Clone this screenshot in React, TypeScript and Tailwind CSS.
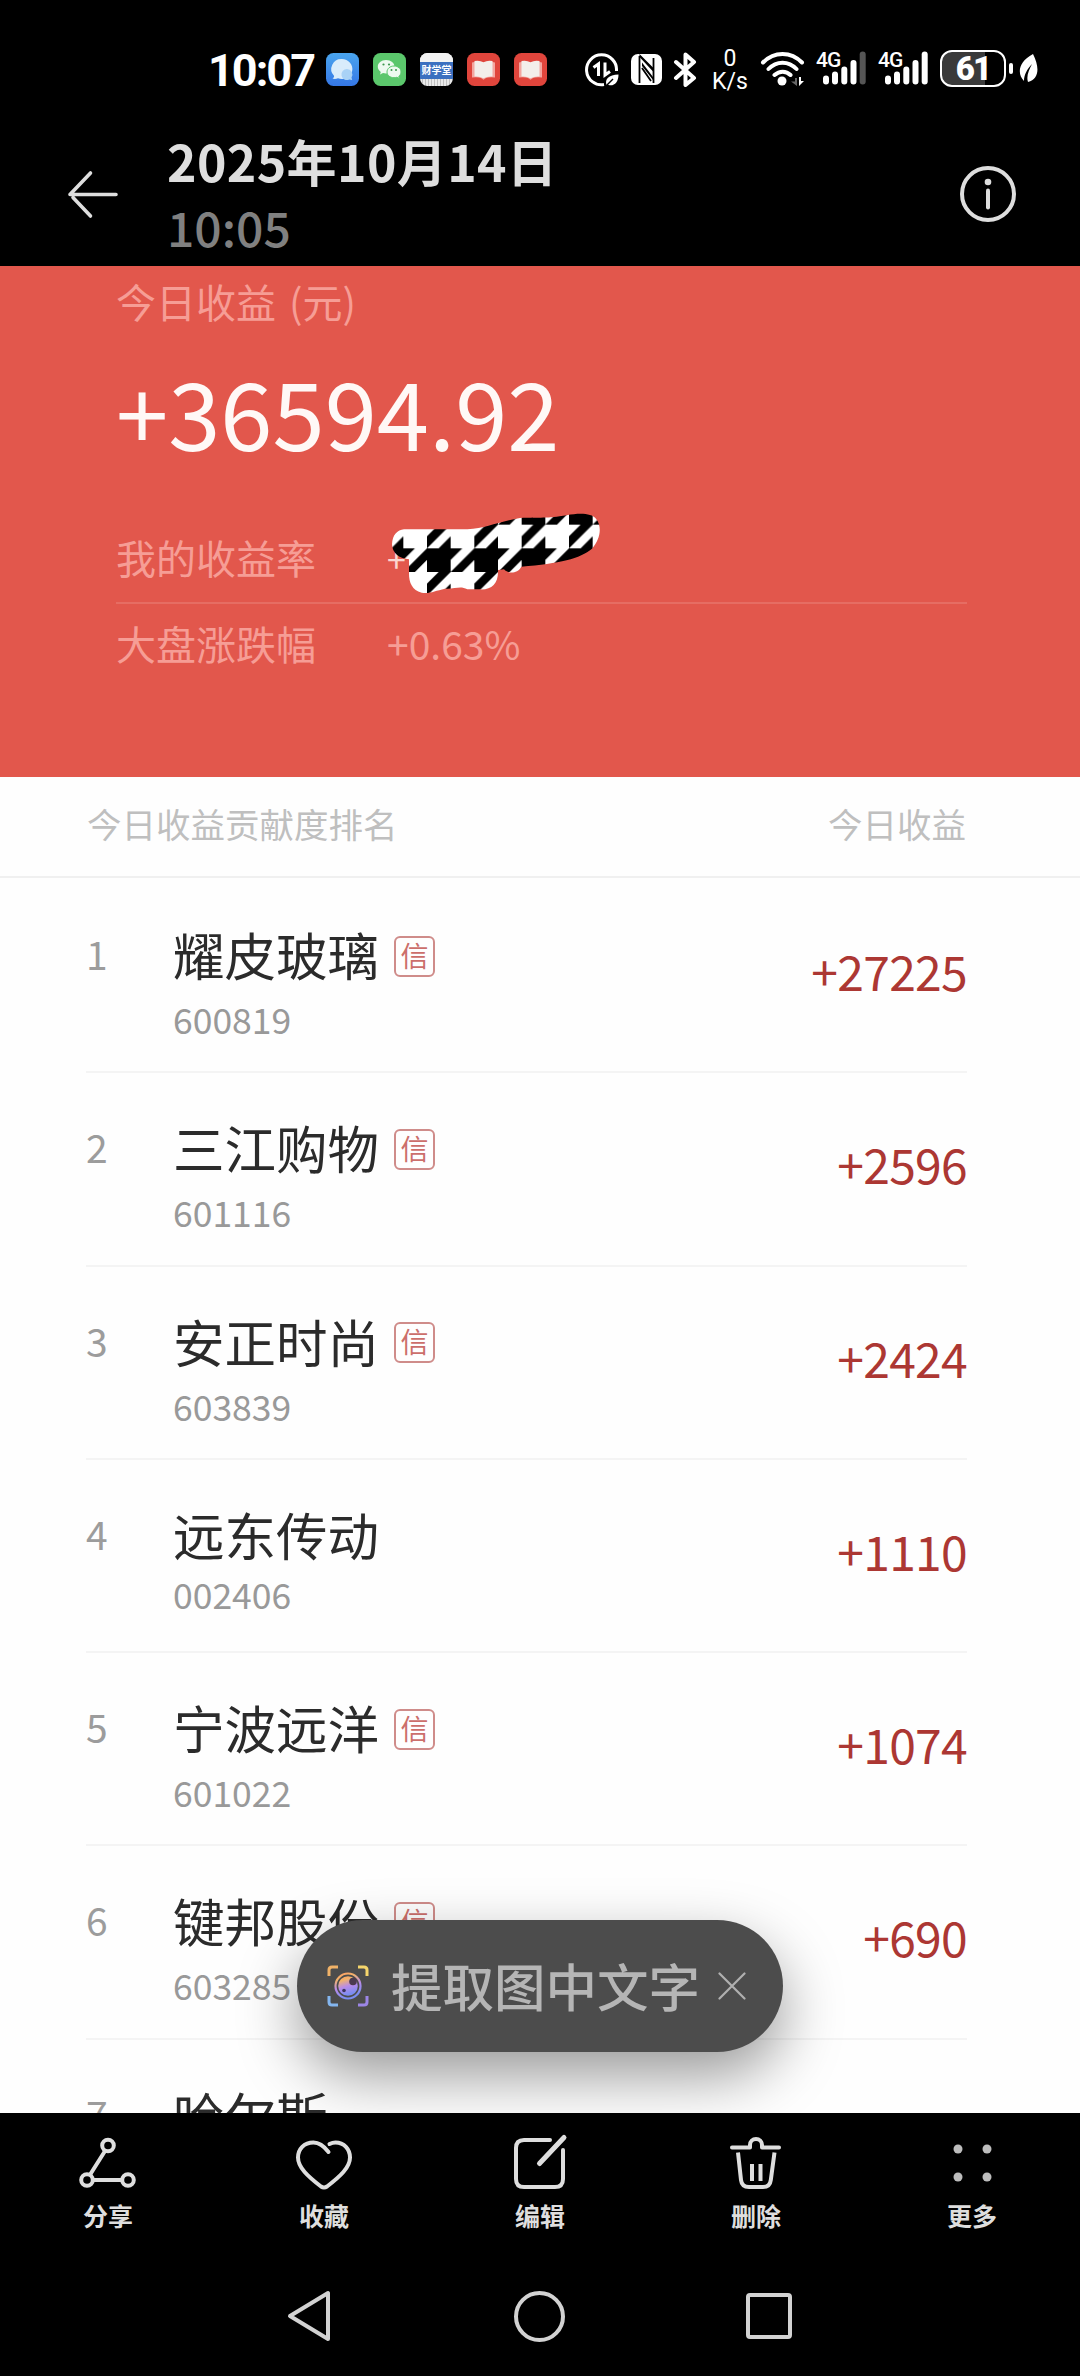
import type { ReactNode } from 'react';

type Stock = {
  rank: number;
  name: string;
  code: string;
  profit: string;
  margin?: boolean;
};

const stocks: Stock[] = [
  { rank: 1, name: '耀皮玻璃', code: '600819', profit: '+27225', margin: true },
  { rank: 2, name: '三江购物', code: '601116', profit: '+2596', margin: true },
  { rank: 3, name: '安正时尚', code: '603839', profit: '+2424', margin: true },
  { rank: 4, name: '远东传动', code: '002406', profit: '+1110' },
  { rank: 5, name: '宁波远洋', code: '601022', profit: '+1074', margin: true },
  { rank: 6, name: '键邦股份', code: '603285', profit: '+690', margin: true },
  { rank: 7, name: '哈尔斯', code: '', profit: '' },
];

function BookIcon() {
  return (
    <svg width="33" height="33" viewBox="0 0 33 33">
      <rect width="33" height="33" rx="7.5" fill="#e0453c" />
      <path d="M5 9.5 q5.500-1.500 11.500 .5 q6-2 11.500-.5 v15 q-6-.5-9 .5 l-2.500 1.800 l-2.500-1.800 q-3-1-9-.5z" fill="#f3a6a0" />
      <path d="M7.500 8 q5-1 9 1.200 q4-2.200 9-1.200 v15.500 q-5-.5-9 1.700 q-4-2.200-9-1.700z" fill="#f3eeea" />
    </svg>
  );
}

function SignalIcon({ weak }: { weak?: boolean }) {
  return (
    <div className="relative h-[36px] w-[50px]">
      <span className="absolute left-0 top-0 font-['Roboto'] text-[21px] font-medium leading-[21px] tracking-[-1px]">4G</span>
      <svg width="50" height="36" viewBox="0 0 50 36" stroke="#fff" strokeWidth="6" strokeLinecap="round">
        <path d="M10 28.500v3M19 24.500v7M28.300 19.500v12M37.500 13v18.500" />
        <path d="M46.700 4.500v27" stroke={weak ? '#555' : '#fff'} />
      </svg>
    </div>
  );
}

function StatusBar() {
  return (
    <div className="flex h-[140px] items-start pl-[208px] pt-[50px] text-white">
      <div className="w-[118px] pt-[2px] font-['Roboto'] text-[45px] font-bold leading-[37px] tracking-[-2px]">10:07</div>
      <div className="flex gap-[14px] pt-[3px]">
        <svg width="33" height="33" viewBox="0 0 33 33">
          <defs>
            <linearGradient id="msg" x2="0" y2="1">
              <stop stopColor="#4aa5ee" />
              <stop offset="1" stopColor="#3577e6" />
            </linearGradient>
          </defs>
          <rect width="33" height="33" rx="7.5" fill="url(#msg)" />
          <path d="M16 6a10.500 10 0 1 1-4 19.300c-2 .8-4 .8-5.500.3 1.500-1 1.700-1.500 1.500-2.800A10 10 0 0 1 16 6z" fill="#d9ecfb" />
          <path d="M21 16a5.500 5.500 0 0 1 4.500 8.500l.7 2.500-3-.5A5.500 5.500 0 1 1 21 16z" fill="#a9d2f6" />
        </svg>
        <svg width="33" height="33" viewBox="0 0 33 33">
          <rect width="33" height="33" rx="7.5" fill="#5bc76c" />
          <path d="M13 7c5 0 8.500 3 8.500 6.500S18 20.500 13 20.500c-1 0-2-.2-3-.5l-3 1.500.8-2.500C5.800 17.500 4.800 15.700 4.800 13.700 4.800 10 8.300 7 13 7z" fill="#eefaf0" />
          <path d="M21 13c4 0 7 2.500 7 6 0 1.800-.8 3.200-2.200 4.300l.6 2.200-2.600-1.200c-.9.3-1.800.4-2.800.4-4 0-7-2.500-7-5.700s3-6 7-6z" fill="#eefaf0" stroke="#5bc76c" />
          <g fill="#3f9950">
            <circle cx="10.500" cy="11.500" r="1.100" />
            <circle cx="16" cy="11.500" r="1.100" />
            <circle cx="18.500" cy="17" r="1" />
            <circle cx="23" cy="17" r="1" />
          </g>
        </svg>
        <div className="flex h-[33px] w-[33px] flex-col items-center justify-center overflow-hidden rounded-[7.5px] bg-[repeating-linear-gradient(90deg,#e9e9e9_0_2px,#bfbfbf_2px_3px)]">
          <div className="h-[9px] w-full bg-[#f3f3f3]" />
          <div className="h-[17px] w-full shrink-0 bg-[#3b70c0] text-center text-[10px] font-bold leading-[16px]">财学堂</div>
          <div className="h-[7px] w-full" />
        </div>
        <BookIcon />
        <BookIcon />
      </div>

      <svg className="ml-[38px] mt-[3px]" width="34" height="34" viewBox="0 0 34 34" fill="none" stroke="#fff" strokeWidth="3">
        <path d="M19 31.600A15 15 0 1 1 31.500 18" />
        <path d="M8.500 14.500l5-3.500v12M20 9.500v12.500l5-3.500" />
        <path d="M21.500 32c-2-6 2-10 12-10.500 0 8-4.500 12-10 10.500z" fill="#fff" stroke="none" />
        <path d="M21 33l7-7" stroke="#000" strokeWidth="1.5" />
      </svg>
      {/* NFC */}
      <svg className="ml-[12px] mt-[4px]" width="31" height="31" viewBox="0 0 31 31">
        <rect width="31" height="31" rx="7" fill="#fff" />
        <path d="M8.500 2v27M11 14l9 13M22.500 4v25" stroke="#000" strokeWidth="1.800" fill="none" />
        <path d="M8.500 0L22.500 14v4L8.500 3zM11 8.500L22 23v3L11 12z" />
      </svg>
      <svg className="ml-[11px] mt-[2px]" width="24" height="35" viewBox="0 0 24 35" fill="none" stroke="#fff" strokeWidth="4" strokeLinejoin="round" strokeLinecap="round">
        <path d="M3 10l18 16-8.500 7V2.500L21 10 3 26" />
      </svg>
      <div className="-mt-[3px] ml-[14px] w-[38px] text-center font-['Roboto'] text-[23px] leading-[23px]">
        <div>0</div>
        <div>K/s</div>
      </div>
      <svg className="ml-[11px] mt-[1px]" width="46" height="36" viewBox="0 0 46 36" fill="none" stroke="#fff" strokeWidth="4" strokeLinecap="round">
        <path d="M3 11.500C14 0 31 0 42 11.500M8.500 18c8-8.500 20-8.500 28 0M14.500 24c5-4.500 11.500-4.500 16 0" />
        <circle cx="22" cy="30" r="4.500" fill="#fff" stroke="none" />
        <path d="M37 27v8l-6-4.500h4v-3.500z" fill="#666" stroke="none" />
        <path d="M39 26v9l5-5h-3v-4z" fill="#fff" stroke="none" />
      </svg>
      <div className="ml-[10px] flex gap-[12px]">
        <SignalIcon weak />
        <SignalIcon />
      </div>
      <div className="ml-[12px] flex h-[37px] w-[66px] items-center justify-center rounded-[12px] border-2 border-white bg-[linear-gradient(90deg,#3a3a3a_0_70%,#000_70%)] font-['Roboto'] text-[33px] font-black leading-none tracking-[-2px]">
        61
      </div>
      <div className="ml-[3px] mt-[13px] h-[11px] w-[4px] rounded bg-white" />
      <svg className="ml-[6px] mt-[4px]" width="19" height="29" viewBox="0 0 19 29">
        <path d="M14 0c7 14 6 25-5 28-2-6 1-12 4-18-5 5-8 11-8 17C-2 20-1 8 14 0z" fill="#fff" />
      </svg>
    </div>
  );
}

function Header() {
  return (
    <div className="flex h-[126px] text-[#dedede]">
      <svg className="ml-[66px] mt-[29px] shrink-0" width="54" height="52" viewBox="0 0 54 52" fill="none" stroke="#dedede" strokeWidth="3.600" strokeLinecap="round" strokeLinejoin="round">
        <path d="M50 25.500H4L24.500 4M7 28.500L24.500 47" />
      </svg>
      <div className="-mt-[2px] ml-[47px] w-[780px]">
        <div className="text-[50px] font-bold leading-[44px] tracking-[0.4px]">2025年10月14日</div>
        <div className="mt-[22px] text-[48px] font-medium leading-[44px] text-[#808080]">10:05</div>
      </div>
      <svg className="ml-[13px] mt-[26px] shrink-0" width="56" height="56" viewBox="0 0 56 56" fill="none" stroke="#dedede" strokeWidth="4" strokeLinecap="round">
        <circle cx="28" cy="28" r="26" />
        <path d="M28 24.500v17" />
        <circle cx="28" cy="16" r="3.300" fill="#dedede" stroke="none" />
      </svg>
    </div>
  );
}

// Houndstooth brush hiding the personal rate
function Scribble() {
  return (
    <svg className="absolute -left-[7px] -top-[49px]" width="240" height="110" viewBox="0 0 720 330">
      <defs>
        <pattern id="tooth" x="141" y="145" width="142" height="142" patternUnits="userSpaceOnUse">
          <rect width="142" height="142" fill="#fff" />
          <path d="M0 0H71V71H0zM71 0H106L71 35zM142 0V35L106 71H71zM35 71H71L0 142V106zM71 106V142H35z" />
        </pattern>
      </defs>
      <path
        d="M72 88H262C320 84 350 66 420 54C480 52 500 56 560 46C600 38 635 40 648 56C668 80 660 120 636 146C600 176 540 190 424 200C412 222 384 222 372 208L354 210C356 250 335 270 300 268H262C240 256 225 268 195 266C165 272 150 282 125 278C95 270 86 245 87 216V178C60 176 36 160 36 132C38 104 52 90 72 88z"
        fill="url(#tooth)"
      />
    </svg>
  );
}

function Summary() {
  return (
    <div className="h-[511px] bg-[#e2574c] pl-[116px] pr-[113px] text-[40px] leading-[60px] text-[#f69d95]">
      <div className="h-[80px] pt-[5px] [word-spacing:4px]">今日收益 (元)</div>
      <div className="h-[176px] pt-[17px] text-[94px] leading-[94px] text-[#fff8f6]">+36594.92</div>
      <div className="flex h-[82px] border-b-2 border-[#e66d63] pt-[5px]">
        <div className="w-[271px]">我的收益率</div>
        <div className="relative mt-[2px] h-[60px] text-[34px] text-[#fbd5d0]">
          +
          <div className="absolute left-0 top-[20px]">
            <Scribble />
          </div>
        </div>
      </div>
      <div className="flex pt-[9px]">
        <div className="w-[271px]">大盘涨跌幅</div>
        <div className="text-[39px]">+0.63%</div>
      </div>
    </div>
  );
}

function StockRow({ stock }: { stock: Stock }) {
  return (
    <div className="mr-[113px] ml-[86px] flex h-[193.300px] shrink-0 border-b-2 border-[#f4f4f4]">
      <div className="w-[87px] pt-[45px] text-[39px] leading-[56px] text-[#9c9c9c]">{stock.rank}</div>
      <div className="flex-1">
        <div className="flex h-[110px] items-center gap-[15px] pt-[38px]">
          <span className="text-[51.500px] leading-[56px] text-[#2b2b2b]">{stock.name}</span>
          {stock.margin && (
            <span className="mt-[4px] flex h-[41px] w-[41px] items-center justify-center rounded-[6px] border-2 border-[#cf8c8a] text-[28px] leading-none text-[#cc6f6b]">
              <span className="-mt-[3px]">信</span>
            </span>
          )}
        </div>
        <div className={stock.margin ? 'pt-[7px] text-[35.500px] leading-[44px] text-[#999]' : 'pt-[2px] text-[35.500px] leading-[44px] text-[#999]'}>{stock.code}</div>
      </div>
      <div className="pt-[60px] text-[48px] leading-[60px] tracking-[-0.7px] text-[#ac3733]">{stock.profit}</div>
    </div>
  );
}

function ExtractPill() {
  return (
    <div className="absolute bottom-[61px] left-[297px] flex h-[132px] w-[486px] items-center rounded-full bg-[#4c4c4c] pl-[30px] shadow-[0_24px_60px_rgba(0,0,0,0.4)]">
      <svg width="42" height="42" viewBox="0 0 42 42" fill="none" strokeWidth="3">
        <defs>
          <linearGradient id="lens" x2="0.3" y2="1">
            <stop stopColor="#ff9b62" />
            <stop offset="0.25" stopColor="#f2b36b" />
            <stop offset="0.6" stopColor="#b78bea" />
            <stop offset="1" stopColor="#7a8df0" />
          </linearGradient>
        </defs>
        <path d="M2 11V5q0-3 3-3h6" stroke="#f0b268" />
        <path d="M31 2h6q3 0 3 3v6" stroke="#f5d56c" />
        <path d="M2 31v6q0 3 3 3h6" stroke="#84b6ef" />
        <path d="M31 40h6q3 0 3-3v-6" stroke="#9c86e6" />
        <circle cx="21" cy="21" r="12.500" stroke="url(#lens)" strokeWidth="2.200" />
        <circle cx="21" cy="21" r="9.800" fill="url(#lens)" />
        <circle cx="26" cy="16.500" r="3.800" fill="#4c3b50" />
        <circle cx="17" cy="25.500" r="1.800" fill="#3e3560" />
      </svg>
      <div className="-mt-[2px] ml-[22px] w-[327px] whitespace-nowrap text-[51.500px] font-medium leading-[60px] text-[#b5b5b5]">提取图中文字</div>
      <svg width="28" height="28" viewBox="0 0 28 28" stroke="#b0b0b0" strokeWidth="2.200" strokeLinecap="round">
        <path d="M1.500 1.500l25 25M26.500 1.500l-25 25" />
      </svg>
    </div>
  );
}

function Action({ label, children }: { label: string; children: ReactNode }) {
  return (
    <div className="flex w-[216px] flex-col items-center">
      <svg width="60" height="60" viewBox="0 0 60 60" fill="none" stroke="#dedede" strokeWidth="4" strokeLinecap="round" strokeLinejoin="round">
        {children}
      </svg>
      <div className="mt-[7px] text-[25px] font-bold leading-[30px] text-[#dedede]">{label}</div>
    </div>
  );
}

function BottomBar() {
  return (
    <div className="h-[263px] bg-black">
      <div className="flex pt-[20px]">
        <Action label="分享">
          <circle cx="30" cy="12.500" r="5.800" />
          <circle cx="9" cy="47" r="5.800" />
          <circle cx="50" cy="47" r="5.800" />
          <path d="M27 18L12.500 41M15 47h29" />
        </Action>
        <Action label="收藏">
          <path d="M34.500 19C29.500 12.500 25 9.500 19.500 9.500 10 9.500 4 16 4 24.500c0 10 10 19 23 29q3 2 6 0c13-10 23-19 23-29C56 16 50 9.500 41.500 9.500q-3 0-6 1.500" />
        </Action>
        <Action label="编辑">
          <path d="M40 7H14Q6 7 6 15V46q0 8 8 8H45q8 0 8-8V17" />
          <path d="M29.500 30.500L54 4.500" strokeWidth="5" />
        </Action>
        <Action label="删除">
          <path d="M6 14.500H24V12a6 6 0 0 1 12 0v2.500H53" />
          <path d="M12 19.500L15 47q.8 7 8 7H37q7 0 7.800-7L48.500 19.500M26 31v17M34.500 31v17" strokeLinecap="butt" />
        </Action>
        <Action label="更多">
          <g fill="#bdbdbd" stroke="none">
            <circle cx="16" cy="16" r="4.500" />
            <circle cx="45" cy="16" r="4.500" />
            <circle cx="16" cy="44" r="4.500" />
            <circle cx="45" cy="44" r="4.500" />
          </g>
        </Action>
      </div>
      <div className="mt-[59px] flex items-center gap-[184px] pl-[285px]">
        <svg width="46" height="54" viewBox="0 0 46 54" fill="none" stroke="#d2d2d2" strokeWidth="4" strokeLinejoin="round">
          <path d="M43 4V50L5 27z" />
        </svg>
        <div className="-ml-[1px] h-[51px] w-[51px] rounded-full border-4 border-[#d2d2d2]" />
        <div className="-ml-[3px] h-[46px] w-[46px] rounded-[4px] border-4 border-[#d2d2d2]" />
      </div>
    </div>
  );
}

export default function App() {
  return (
    <div className="flex h-[2376px] w-[1080px] flex-col overflow-hidden bg-black font-['Noto_Sans_CJK_SC',sans-serif]">
      <StatusBar />
      <Header />
      <div className="relative h-[1847px] overflow-hidden bg-[#fefefe]">
        <Summary />
        <div className="mb-[2px] flex h-[101px] justify-between border-b-2 border-[#f0f0f0] pr-[114px] pl-[87px] pt-[16px] text-[34.500px] leading-[60px] text-[#bfbfbf]">
          <div>今日收益贡献度排名</div>
          <div>今日收益</div>
        </div>
        {stocks.map((stock) => (
          <StockRow key={stock.rank} stock={stock} />
        ))}
        <ExtractPill />
      </div>
      <BottomBar />
    </div>
  );
}
